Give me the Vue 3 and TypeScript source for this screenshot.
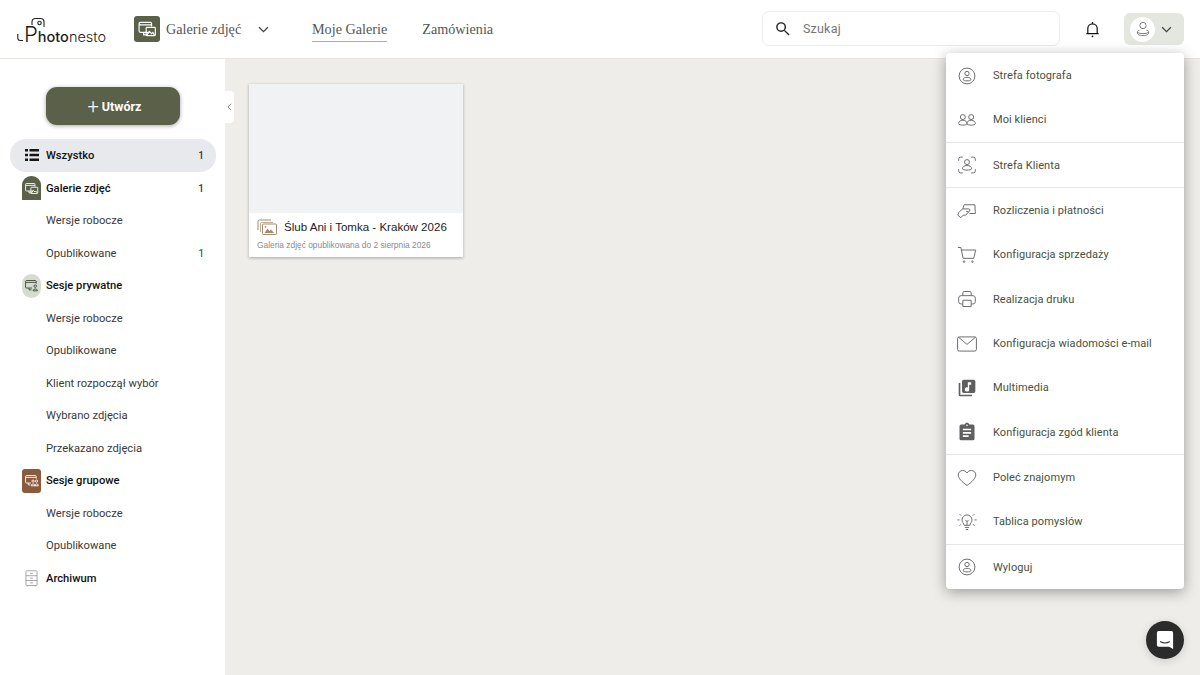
<script setup lang="ts">
type MenuItem = { label: string; icon: string } | { divider: true };
type NavRow = { label: string; level: 'all' | 'head' | 'sub'; count?: string; tile?: string };

const icons: Record<string, string> = {
  person: '<circle cx="12" cy="12" r="9.5"/><circle cx="12" cy="9" r="2.6"/><path d="M7.5 16.500c0-2 1.600-2.900 4.500-2.900s4.500.9 4.500 2.900c0 1.800-9 1.800-9 0z"/>',
  people: '<circle cx="7" cy="8.500" r="3"/><path d="M2 16.500c0-2.600 1.800-4.200 5-4.200s5 1.600 5 4.200c0 2.200-10 2.200-10 0z"/><circle cx="17" cy="8.500" r="3"/><path d="M12 16.500c0-2.600 1.800-4.200 5-4.200s5 1.600 5 4.200c0 2.200-10 2.200-10 0z"/>',
  face: '<path d="M2 7V5Q2 2.500 4.500 2.500H7M17 2.500h2.500Q22 2.500 22 5v2M2 17v2q0 2.500 2.500 2.500H7M17 21.500h2.500Q22 21.500 22 19v-2"/><circle cx="12" cy="8.500" r="3"/><path d="M6.500 16.500c0-2.400 2.200-3.800 5.500-3.800s5.500 1.400 5.500 3.800c0 2.200-11 2.200-11 0z"/>',
  payment: '<path d="M7 9.500 8.500 4.500h13l.5 10.500h-7M2 14l4.500-4.500h7.500q1.500 0 1.500 1.500T14 12.500H11M2 14l-1 3 3.500 3 3-3h3l3.500-4"/>',
  cart: '<path d="M1 3h3.700l2.600 13h12.700l2.500-10H5.200"/><circle cx="8.500" cy="20" r=".9"/><circle cx="18.500" cy="20" r=".9"/>',
  print: '<path d="M7 8V4.500Q7 3 8.500 3h7Q17 3 17 4.500V8M7 18H5q-3 0-3-3v-4q0-3 3-3h14q3 0 3 3v4q0 3-3 3h-2"/><path d="M7 13.500h10V21H7z"/>',
  mail: '<path d="M.7 5.500Q.7 3.500 2.700 3.500h18.600q2 0 2 2v13q0 2-2 2H2.700q-2 0-2-2z"/><path d="M2 4 12 12.500 22 4"/>',
  heart: '<path d="M12 21C6 16.500 1.500 12.500 1.500 8.300 1.500 5.200 4 3 6.800 3c2.300 0 4 1 5.200 3 1.200-2 2.900-3 5.200-3 2.800 0 5.300 2.200 5.300 5.300C22.500 12.500 18 16.500 12 21z"/>',
  bulb: '<path d="M8.500 16c0-2.500-2.500-3.500-2.500-6.500a6 6 0 0 1 12 0c0 3-2.500 4-2.500 6.500zM9.500 18.500h5M10.500 21h3M12 16v-5M10 9.500l2 2 2-2M.5 9.500h2.500M21 9.500h2.500M3 2.500 4.800 4.300M21 2.500 19.200 4.300M3 16.500 4.800 14.700M21 16.500 19.200 14.700"/>',
  music: '<path class="solid" d="M8 2h12q2 0 2 2v12q0 2-2 2H8q-2 0-2-2V4q0-2 2-2zm9 3h-4v6.300a2.600 2.600 0 1 0 1.600 2.400V8H17z"/><path class="solid" d="M2 6h2v14h14v2H4q-2 0-2-2z"/>',
  clip: '<path class="solid" d="M19 3h-4.200C14.400 1.800 13.300 1 12 1s-2.400.8-2.800 2H5q-2 0-2 2v15q0 2 2 2h14q2 0 2-2V5q0-2-2-2zm-7 0c.6 0 1 .4 1 1s-.4 1-1 1-1-.4-1-1 .4-1 1-1zm2 15H7v-2h7zm3-4H7v-2h10zm0-4H7V8h10z"/>',
};

const menu: MenuItem[] = [
  { label: 'Strefa fotografa', icon: 'person' },
  { label: 'Moi klienci', icon: 'people' },
  { divider: true },
  { label: 'Strefa Klienta', icon: 'face' },
  { divider: true },
  { label: 'Rozliczenia i płatności', icon: 'payment' },
  { label: 'Konfiguracja sprzedaży', icon: 'cart' },
  { label: 'Realizacja druku', icon: 'print' },
  { label: 'Konfiguracja wiadomości e-mail', icon: 'mail' },
  { label: 'Multimedia', icon: 'music' },
  { label: 'Konfiguracja zgód klienta', icon: 'clip' },
  { divider: true },
  { label: 'Poleć znajomym', icon: 'heart' },
  { label: 'Tablica pomysłów', icon: 'bulb' },
  { divider: true },
  { label: 'Wyloguj', icon: 'person' },
];

const rows: NavRow[] = [
  { label: 'Wszystko', level: 'all', count: '1', tile: 'list' },
  { label: 'Galerie zdjęć', level: 'head', count: '1', tile: 'gallery' },
  { label: 'Wersje robocze', level: 'sub' },
  { label: 'Opublikowane', level: 'sub', count: '1' },
  { label: 'Sesje prywatne', level: 'head', tile: 'private' },
  { label: 'Wersje robocze', level: 'sub' },
  { label: 'Opublikowane', level: 'sub' },
  { label: 'Klient rozpoczął wybór', level: 'sub' },
  { label: 'Wybrano zdjęcia', level: 'sub' },
  { label: 'Przekazano zdjęcia', level: 'sub' },
  { label: 'Sesje grupowe', level: 'head', tile: 'group' },
  { label: 'Wersje robocze', level: 'sub' },
  { label: 'Opublikowane', level: 'sub' },
  { label: 'Archiwum', level: 'head', tile: 'archive' },
];
</script>

<template>
  <div class="page">
    <header class="topbar">
      <div class="logo">
        <svg class="logo-mark" viewBox="0 0 30 28" fill="none">
          <path d="M.8 18v4q0 2.500 2.500 2.500H6" />
          <path d="M15 9V6q0-3.500 3.500-3.500h5Q27 2.500 27 6v5" />
          <circle cx="22.500" cy="7" r="1.700" />
        </svg>
        <span class="logo-p">P</span><span class="logo-a">hoto</span><span class="logo-b">nesto</span>
      </div>

      <div class="switcher">
        <span class="switch-tile">
          <svg viewBox="0 0 24 24" fill="none" class="tile-svg">
            <path d="M15 16H4q-1.500 0-1.500-1.500v-9Q2.500 4 4 4h12q1.500 0 1.500 1.500V9M2.500 7h15M8 16v3h5" />
            <path d="M11 11q0-1 1-1h9q1 0 1 1v8q0 1-1 1h-9q-1 0-1-1z" />
            <path d="M12 19l3-4 2.500 2.500 1.500-1.500 2 3" />
          </svg>
        </span>
        <span class="serif">Galerie zdjęć</span>
        <svg class="chev" viewBox="0 0 12 8" fill="none"><path d="M1 1.500 6 6.500 11 1.500" /></svg>
      </div>

      <nav class="nav">
        <a class="serif nav-link active">Moje Galerie</a>
        <a class="serif nav-link">Zamówienia</a>
      </nav>

      <div class="search">
        <svg class="search-icon" viewBox="0 0 16 16" fill="none">
          <circle cx="6.500" cy="6.500" r="4.500" />
          <path d="M10 10l5 5" />
        </svg>
        <span class="search-text">Szukaj</span>
      </div>

      <svg class="bell" viewBox="0 0 16 18" fill="none">
        <path d="M3 13.500V8a5 5 0 0 1 10 0v5.500M1.500 13.500h13M8 1v2" />
        <circle cx="8" cy="16.300" r="1" class="dot" />
      </svg>

      <div class="account">
        <span class="avatar">
          <svg viewBox="0 0 16 18" fill="none">
            <circle cx="8" cy="5" r="3.600" />
            <path d="M1.500 13c0-1.800 1-2.500 2.500-2.500M14.500 13c0-1.800-1-2.500-2.500-2.500M1.500 13c0 2.500 2 3.500 6.500 3.500s6.500-1 6.500-3.500c-2 1-4 1.300-6.500 1.300S3.500 14 1.500 13z" />
          </svg>
        </span>
        <svg class="chev small" viewBox="0 0 12 8" fill="none"><path d="M1 1.500 6 6.500 11 1.500" /></svg>
      </div>
    </header>

    <div class="body">
      <aside class="sidebar">
        <button class="create"><span class="plus">+</span>Utwórz</button>
        <ul class="rows">
          <li v-for="(row, i) in rows" :key="i" class="row" :class="row.level">
            <span class="row-icon" :class="row.tile">
              <svg v-if="row.tile === 'list'" viewBox="0 0 14 12" class="list-svg">
                <path d="M0 0h3v2.500H0zM4.500 0H14v2.500H4.500zM0 4.700h3v2.600H0zM4.500 4.700H14v2.600H4.500zM0 9.500h3V12H0zM4.500 9.500H14V12H4.500z" />
              </svg>
              <svg v-else-if="row.tile === 'archive'" viewBox="0 0 14 18" fill="none" class="arch-svg">
                <path d="M1 1.500Q1 .7 1.800 .7h10.400q.8 0 .8.8v14.200q0 .8-.8.8H1.800q-.8 0-.8-.8zM1 6h12M1 11.200h12M5.500 3.500h3M5.500 8.500h3M5.500 13.700h3M2.500 16.500v1M11.500 16.500v1" />
              </svg>
              <svg v-else-if="row.tile === 'gallery'" viewBox="0 0 24 24" fill="none" class="tile-svg">
                <path d="M15 16H4q-1.500 0-1.500-1.500v-9Q2.500 4 4 4h12q1.500 0 1.500 1.500V9M2.500 7h15M8 16v3h5" />
                <path d="M11 11q0-1 1-1h9q1 0 1 1v8q0 1-1 1h-9q-1 0-1-1z" />
                <path d="M12 19l3-4 2.500 2.500 1.500-1.500 2 3" />
              </svg>
              <svg v-else-if="row.tile === 'private'" viewBox="0 0 24 24" fill="none" class="tile-svg">
                <path d="M13 16H4q-1.500 0-1.500-1.500v-9Q2.500 4 4 4h14q1.500 0 1.500 1.500V9M2.500 7h17M8 16v3h4" />
                <circle cx="18" cy="13" r="2" />
                <path d="M14.500 20.500q0-3 3.500-3t3.500 3z" />
              </svg>
              <svg v-else-if="row.tile === 'group'" viewBox="0 0 24 24" fill="none" class="tile-svg">
                <path d="M11 16H4q-1.500 0-1.500-1.500v-9Q2.500 4 4 4h14q1.500 0 1.500 1.500V9M2.500 7h17M7 16v3h3" />
                <circle cx="14.500" cy="13" r="1.800" />
                <circle cx="20" cy="13" r="1.800" />
                <path d="M11.500 20.500q0-3 3-3t3 3zM17.500 20.500q0-3 2.800-3t2.700 3z" />
              </svg>
            </span>
            <span class="row-label">{{ row.label }}</span>
            <span v-if="row.count" class="row-count">{{ row.count }}</span>
          </li>
        </ul>
      </aside>

      <main class="content">
        <span class="collapse">
          <svg viewBox="0 0 6 10" fill="none"><path d="M5 1 1 5l4 4" /></svg>
        </span>
        <article class="card">
          <div class="thumb"></div>
          <div class="card-info">
            <div class="card-title">
              <svg viewBox="0 0 20 16" fill="none" class="album">
                <path d="M1 11V2.500Q1 1 2.500 1H14" />
                <path d="M3.500 13V4.500q0-1 1-1H16" opacity=".7" />
                <rect x="5.500" y="5" width="14" height="10.500" rx="1" />
                <path class="solid" d="M7.500 14l3-4.500 2 2.500 1.500-1.500 3 3.500z" />
                <circle class="solid" cx="8.500" cy="7.800" r=".9" />
              </svg>
              <span>Ślub Ani i Tomka - Kraków 2026</span>
            </div>
            <div class="card-sub">Galeria zdjęć opublikowana do 2 sierpnia 2026</div>
          </div>
        </article>
      </main>
    </div>

    <div class="menu">
      <template v-for="(item, i) in menu" :key="i">
        <hr v-if="'divider' in item" class="menu-div" />
        <div v-else class="menu-item">
          <svg class="menu-icon" viewBox="0 0 24 24" fill="none" v-html="icons[item.icon]"></svg>
          <span>{{ item.label }}</span>
        </div>
      </template>
    </div>

    <div class="chat">
      <svg viewBox="0 0 20 22" class="chat-svg">
        <path d="M3 1h14q2 0 2 2v18l-4.500-2.500H3q-2 0-2-2V3q0-2 2-2z" fill="#fff" />
        <path d="M5 13q5 2.500 10 0" fill="none" stroke="#2b2b2b" stroke-width="1.200" stroke-linecap="round" />
      </svg>
    </div>
  </div>
</template>

<style>
html, body { margin: 0; padding: 0; }
</style>

<style scoped>
.page {
  position: relative;
  width: 1200px;
  height: 675px;
  overflow: hidden;
  display: flex;
  flex-direction: column;
  background: #fff;
  font-family: Roboto, "Liberation Sans", sans-serif;
}
.topbar {
  height: 59px;
  flex: none;
  box-sizing: border-box;
  display: flex;
  align-items: center;
  padding: 0 16px 0 17px;
  background: #fff;
  border-bottom: 1px solid #e6e5e0;
}
.logo {
  position: relative;
  width: 87px;
  flex: none;
  height: 26px;
  margin-top: 9px;
  display: flex;
  align-items: baseline;
  color: #1c1c1c;
  font-family: Inter, "Noto Sans", sans-serif;
  line-height: 26px;
  padding-left: 7px;
  box-sizing: border-box;
}
.logo-mark {
  position: absolute;
  left: 0;
  top: -5px;
  width: 30px;
  height: 28px;
  stroke: #222;
  stroke-width: 1.100;
}
.logo-p { font-size: 22px; font-weight: 300; }
.logo-a { font-size: 14.500px; font-weight: 500; }
.logo-b { font-size: 14.500px; font-weight: 300; }
.switcher {
  display: flex;
  align-items: center;
  margin-left: 30px;
  width: 137px;
  flex: none;
}
.switch-tile {
  width: 26px;
  height: 26px;
  background: #5a6148;
  border-radius: 3px;
  display: flex;
  align-items: center;
  justify-content: center;
  margin-right: 6px;
  flex: none;
}
.switch-tile .tile-svg { width: 20px; height: 20px; }
.tile-svg { stroke: #fff; stroke-width: 1.400; }
.serif {
  font-family: "Liberation Serif", "DejaVu Serif", serif;
  font-size: 14.200px;
  color: #555;
  white-space: nowrap;
}
.chev { width: 11px; height: 7px; stroke: #444; stroke-width: 1.500; margin-left: 17px; flex: none; }
.chev.small { margin-left: 0; }
.nav { display: flex; gap: 35px; margin-left: 41px; }
.nav-link { display: block; line-height: 22px; position: relative; }
.nav-link.active::after {
  content: "";
  position: absolute;
  left: 0;
  right: 0;
  bottom: -2px;
  height: 1.500px;
  background: #a3b88a;
}
.search {
  margin-left: auto;
  width: 298px;
  height: 35px;
  box-sizing: border-box;
  border: 1px solid #ececec;
  border-radius: 7px;
  display: flex;
  align-items: center;
  padding-left: 12px;
  margin-top: -1px;
}
.search-icon { width: 15px; height: 15px; stroke: #222; stroke-width: 1.500; margin-right: 13px; }
.search-text { font-size: 12.500px; color: #757575; letter-spacing: .2px; }
.bell { width: 15px; height: 17px; margin-left: 25px; stroke: #111; stroke-width: 1.300; }
.bell .dot { fill: #111; stroke: none; }
.account {
  margin-left: 24px;
  width: 60px;
  height: 32px;
  background: #e4e7df;
  border-radius: 6px;
  display: flex;
  align-items: center;
  gap: 6px;
  padding-left: 6px;
  box-sizing: border-box;
}
.avatar {
  width: 25px;
  height: 25px;
  border-radius: 50%;
  background: #fff;
  display: flex;
  align-items: center;
  justify-content: center;
  flex: none;
}
.avatar svg { width: 14px; height: 16px; stroke: #6a6a6a; stroke-width: 1; }
.body { flex: 1; display: flex; min-height: 0; }
.sidebar {
  width: 225px;
  flex: none;
  background: #fff;
  box-sizing: border-box;
  padding-top: 28px;
}
.create {
  display: flex;
  align-items: center;
  justify-content: center;
  margin-left: 46px;
  width: 134px;
  height: 38px;
  border: none;
  border-radius: 11px;
  background: #5a6148;
  color: #fff;
  font: 700 12.500px Roboto, sans-serif;
  box-shadow: 0 1px 4px rgba(0, 0, 0, .35);
  padding: 0 0 0 3px;
}
.plus { font-size: 20px; font-weight: 300; margin-right: 3px; line-height: 1; }
.rows { list-style: none; margin: 14px 0 0; padding: 0; }
.row {
  height: 32.500px;
  box-sizing: border-box;
  display: flex;
  align-items: center;
  position: relative;
  margin: 0 9px 0 10px;
  padding: 1px 12px 0 12px;
  font-size: 11.200px;
  color: #3a3a3a;
}
.row.head, .row.all { color: #111; font-weight: 500; }
.row.all { background: #e8e9ed; border-radius: 16px; padding-top: 0; }
.row-icon {
  width: 19px;
  height: 24px;
  margin-right: 5px;
  flex: none;
  display: flex;
  align-items: center;
  justify-content: center;
}
.row-icon .tile-svg { width: 15px; height: 15px; }
.gallery { background: #5a6148; border-radius: 9px 9px 0 0; }
.private { background: #d5dbcf; border-radius: 10px; }
.private .tile-svg { stroke: #3d4433; }
.group { background: #8b5a3c; border-radius: 3px; }
.list-svg { width: 14px; height: 12px; fill: #151515; }
.arch-svg { width: 13px; height: 17px; stroke: #8a8a8a; stroke-width: .8; }
.row-label { white-space: nowrap; }
.row-count { margin-left: auto; font-size: 10px; font-weight: 500; color: #333; }
.row.sub .row-count { font-weight: 400; }
.content {
  flex: 1;
  background: #eeede9;
  position: relative;
  padding: 25px 0 0 24px;
}
.collapse {
  position: absolute;
  left: 0;
  top: 32px;
  width: 9px;
  height: 32px;
  background: #fff;
  border-radius: 0 4px 4px 0;
  display: flex;
  align-items: center;
  justify-content: center;
}
.collapse svg { width: 5px; height: 8px; stroke: #777; stroke-width: 1.200; }
.card {
  width: 214px;
  height: 173px;
  background: #fff;
  box-shadow: 0 1px 3px rgba(0, 0, 0, .3);
  display: flex;
  flex-direction: column;
}
.thumb { height: 129px; background: #f1f2f4; }
.card-info { padding: 4px 8px 0; }
.card-title {
  display: flex;
  align-items: center;
  gap: 7px;
  font: 11.550px "Liberation Sans", Arial, sans-serif;
  color: #222;
  height: 19px;
}
.album { width: 20px; height: 16px; stroke: #a58a6c; stroke-width: 1; flex: none; }
.album .solid { fill: #a58a6c; stroke: none; }
.card-sub {
  font: 8.400px "Liberation Sans", Arial, sans-serif;
  color: #8a8a8a;
  margin-top: 4px;
  white-space: nowrap;
}
.menu {
  position: absolute;
  left: 946px;
  top: 53px;
  width: 238px;
  background: #fff;
  border-radius: 4px;
  box-shadow: 0 3px 14px rgba(0, 0, 0, .35);
  z-index: 5;
}
.menu-div { margin: 0; border: none; height: 1px; background: #e6e6e6; }
.menu-item {
  height: 44.330px;
  box-sizing: border-box;
  padding: 1px 0 0 11px;
  display: flex;
  align-items: center;
  font-size: 11px;
  letter-spacing: .08px;
  color: #48503c;
  white-space: nowrap;
}
.menu-icon {
  width: 20px;
  height: 20px;
  margin-right: 16px;
  flex: none;
  stroke: #6e6e6e;
  stroke-width: 1.200;
}
.menu-icon :deep(.solid) { fill: #5f5f5f; stroke: none; }
.chat {
  position: absolute;
  left: 1146px;
  top: 621px;
  width: 38px;
  height: 38px;
  border-radius: 50%;
  background: #2b2b2b;
  display: flex;
  align-items: center;
  justify-content: center;
  box-shadow: 0 2px 8px rgba(0, 0, 0, .15);
}
.chat-svg { width: 18px; height: 20px; }
</style>
